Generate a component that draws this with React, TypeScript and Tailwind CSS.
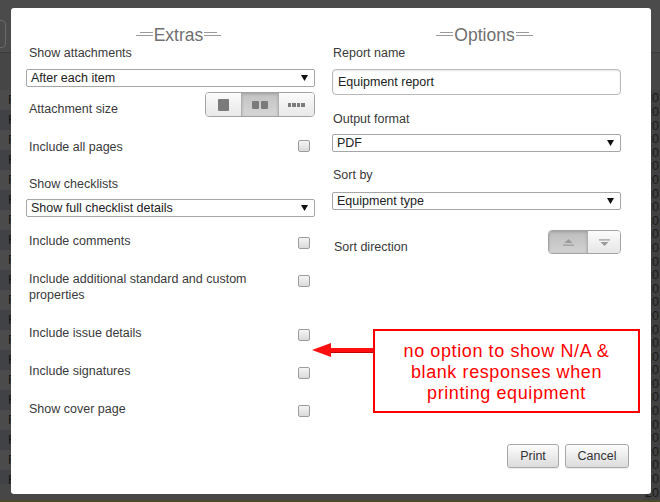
import React from "react";

const FONT = "font-['Liberation_Sans',Arial,Helvetica,sans-serif]";

function Deco({ flip }: { flip?: boolean }) {
  return (
    <svg width="17" height="5" viewBox="0 0 17 5" className="mt-[-2px]" style={flip ? { transform: "scaleX(-1)" } : undefined}>
      <line x1="4" y1="0.5" x2="17" y2="0.5" stroke="#9a9a9a" strokeWidth="1" />
      <line x1="0" y1="3.5" x2="17" y2="3.5" stroke="#9a9a9a" strokeWidth="1" />
    </svg>
  );
}

function Title({ children }: { children: React.ReactNode }) {
  return (
    <div className="h-[20px] pl-[16px] flex items-center justify-center gap-[1px]">
      <Deco />
      <span className="text-[17.5px] leading-[20px] text-[#6f6f6f]">{children}</span>
      <Deco flip />
    </div>
  );
}

function Label({ children, className = "" }: { children: React.ReactNode; className?: string }) {
  return <div className={"text-[12.5px] leading-[16px] text-[#3a3a3a] " + className}>{children}</div>;
}

function Select({ value, className = "" }: { value: string; className?: string }) {
  return (
    <div
      className={
        "h-[18px] border border-[#a6a6a6] rounded-[2px] bg-white flex items-center pl-[4px] pr-[6px] text-[12.5px] leading-none text-[#222] " +
        className
      }
    >
      <span className="flex-1">{value}</span>
      <svg width="7" height="6" viewBox="0 0 7 6">
        <polygon points="0,0 7,0 3.5,6" fill="#111" />
      </svg>
    </div>
  );
}

function Checkbox({ className = "" }: { className?: string }) {
  return (
    <div
      className={
        "w-[12px] h-[12px] shrink-0 rounded-[2px] border border-[#9c9c9c] bg-linear-to-b from-[#f5f5f5] to-[#dadada] " +
        className
      }
    />
  );
}

function CheckRow({ label, className = "", cbTop = "mt-[4px]" }: { label: React.ReactNode; className?: string; cbTop?: string }) {
  return (
    <div className={"flex items-start justify-between pr-[5px] " + className}>
      <Label className="pl-[3px] w-[250px]">{label}</Label>
      <Checkbox className={cbTop} />
    </div>
  );
}

function BgRows() {
  const rows = Array.from({ length: 20 });
  return (
    <div className="flex flex-col">
      {rows.map((_, i) => (
        <div
          key={i}
          className={
            "h-[20px] flex items-center pl-[8px] text-[12.5px] text-[#161616] " +
            (i % 2 === 0 ? "bg-[#4b4b4b]" : "bg-[#414245]")
          }
        >
          <span className="w-[262px]">Roof module</span>
          <span className="w-[240px]">Roof module</span>
          <span>SE001 - HQ Building</span>
        </div>
      ))}
    </div>
  );
}

export default function App() {
  const dates = Array.from({ length: 30 });
  return (
    <div className={"relative w-[660px] h-[502px] overflow-hidden bg-[#474747] " + FONT}>
      {/* backdrop page */}
      <div className="flex flex-col h-full">
        <div className="h-[57px] bg-[#4b4b4b] border-b border-[#3b3b3b] pt-[20px]">
          <div className="ml-[-20px] w-[26px] h-[28px] rounded-[4px] border border-[#6a6a6a]" />
        </div>
        <div className="h-[42px] bg-[#464646]" />
        <div className="flex flex-1">
          <div className="w-[645px] h-[394px] overflow-hidden">
            <BgRows />
          </div>
          <div className="flex-1 bg-[#414141] overflow-hidden pt-[2px] text-[12.5px] leading-[13.6px] text-[#1a1a1a]">
            {dates.map((_, i) => (
              <div key={i} className="whitespace-nowrap">2015</div>
            ))}
          </div>
        </div>
        <div className="h-[2px] bg-[#4b4a2b]" />
      </div>

      {/* modal */}
      <div className="absolute left-[11px] top-[8px] w-[640px] h-[486px] bg-white rounded-[3px] flex flex-col">
        <div className="flex pl-[15px] pt-[17px] gap-[17px]">
          {/* Extras */}
          <div className="w-[289px] flex flex-col">
            <Title>Extras</Title>
            <Label className="pl-[3px]">Show attachments</Label>
            <Select value="After each item" className="mt-[8px]" />
            <div className="mt-[5px] flex items-end justify-between">
              <Label className="pl-[3px]">Attachment size</Label>
              <div className="flex h-[25px] w-[110px] rounded-[4px] border border-[#a2a2a2] overflow-hidden">
                <div className="flex-1 flex items-center justify-center bg-linear-to-b from-[#fbfbfb] to-[#e8e8e8]">
                  <div className="w-[11px] h-[12px] rounded-[1px] bg-[#7b7b7b]" />
                </div>
                <div className="flex-1 flex items-center justify-center gap-[2px] border-l border-[#b0b0b0] bg-linear-to-b from-[#c2c2c2] to-[#d6d6d6] shadow-[inset_0_1px_3px_rgba(0,0,0,0.18)]">
                  <div className="w-[7px] h-[8px] rounded-[1px] bg-[#7b7b7b]" />
                  <div className="w-[7px] h-[8px] rounded-[1px] bg-[#7b7b7b]" />
                </div>
                <div className="flex-1 flex items-center justify-center gap-[1px] border-l border-[#b0b0b0] bg-linear-to-b from-[#fbfbfb] to-[#e8e8e8]">
                  <div className="w-[3.5px] h-[4px] bg-[#7b7b7b]" />
                  <div className="w-[3.5px] h-[4px] bg-[#7b7b7b]" />
                  <div className="w-[3.5px] h-[4px] bg-[#7b7b7b]" />
                  <div className="w-[3.5px] h-[4px] bg-[#7b7b7b]" />
                </div>
              </div>
            </div>
            <CheckRow label="Include all pages" className="mt-[22px]" cbTop="mt-[1px]" />
            <Label className="pl-[3px] mt-[21px]">Show checklists</Label>
            <Select value="Show full checklist details" className="mt-[7px]" />
            <CheckRow label="Include comments" className="mt-[16px]" />
            <CheckRow label="Include additional standard and custom properties" className="mt-[22px]" />
            <CheckRow label="Include issue details" className="mt-[22px]" />
            <CheckRow label="Include signatures" className="mt-[22px]" />
            <CheckRow label="Show cover page" className="mt-[22px]" />
          </div>

          {/* Options */}
          <div className="w-[289px] flex flex-col">
            <Title>Options</Title>
            <Label className="pl-[1px]">Report name</Label>
            <div className="mt-[8px] h-[26px] rounded-[4px] border border-[#b9b9b9] shadow-[inset_0_1px_2px_rgba(0,0,0,0.1)] flex items-center pl-[5px] text-[12.5px] text-[#222]">
              Equipment report
            </div>
            <Label className="pl-[1px] mt-[16px]">Output format</Label>
            <Select value="PDF" className="mt-[7px]" />
            <Label className="pl-[1px] mt-[15px]">Sort by</Label>
            <Select value="Equipment type" className="mt-[9px]" />
            <div className="mt-[20px] flex items-start justify-between">
              <Label className="pl-[2px] mt-[9px]">Sort direction</Label>
              <div className="flex h-[24px] w-[73px] rounded-[4px] border border-[#a2a2a2] overflow-hidden">
                <div className="w-[38px] flex items-center justify-center bg-linear-to-b from-[#bdbdbd] to-[#d2d2d2] shadow-[inset_0_1px_3px_rgba(0,0,0,0.18)]">
                  <svg width="11" height="7" viewBox="0 0 11 7">
                    <polygon points="1.5,4 9.5,4 5.5,0" fill="#9a9a9a" />
                    <rect x="0" y="5.5" width="11" height="1.2" fill="#9a9a9a" />
                  </svg>
                </div>
                <div className="flex-1 flex items-center justify-center border-l border-[#b0b0b0] bg-linear-to-b from-[#fbfbfb] to-[#e6e6e6]">
                  <svg width="11" height="7" viewBox="0 0 11 7">
                    <rect x="0" y="0.3" width="11" height="1.2" fill="#9a9a9a" />
                    <polygon points="1.5,3 9.5,3 5.5,7" fill="#9a9a9a" />
                  </svg>
                </div>
              </div>
            </div>
          </div>
        </div>

        <div className="mt-auto flex justify-end gap-[6px] pr-[22px] pb-[26px]">
          <button className="w-[52px] h-[24px] rounded-[3px] border border-[#a8a8a8] bg-linear-to-b from-[#fdfdfd] to-[#dcdcdc] shadow-[0_1px_1px_rgba(0,0,0,0.08)] text-[12.5px] text-[#333]">
            Print
          </button>
          <button className="w-[64px] h-[24px] rounded-[3px] border border-[#a8a8a8] bg-linear-to-b from-[#fdfdfd] to-[#dcdcdc] shadow-[0_1px_1px_rgba(0,0,0,0.08)] text-[12.5px] text-[#333]">
            Cancel
          </button>
        </div>
      </div>

      {/* annotation */}
      <svg className="absolute left-[310px] top-[341px]" width="66" height="18" viewBox="0 0 66 18">
        <rect x="19" y="7" width="47" height="4.5" fill="#ff1010" />
        <rect x="19" y="11" width="47" height="1" fill="#c40000" />
        <polygon points="2,9 21,2 21,16" fill="#ff1010" />
      </svg>
      <div className="absolute left-[373px] top-[329px] w-[267px] h-[84px] border-2 border-[#ff0000] bg-white pt-[10px] text-center text-[18px] leading-[21px] tracking-[0.6px] text-[#ff0000]">
        no option to show N/A &amp;
        <br />
        blank responses when
        <br />
        printing equipment
      </div>
    </div>
  );
}
